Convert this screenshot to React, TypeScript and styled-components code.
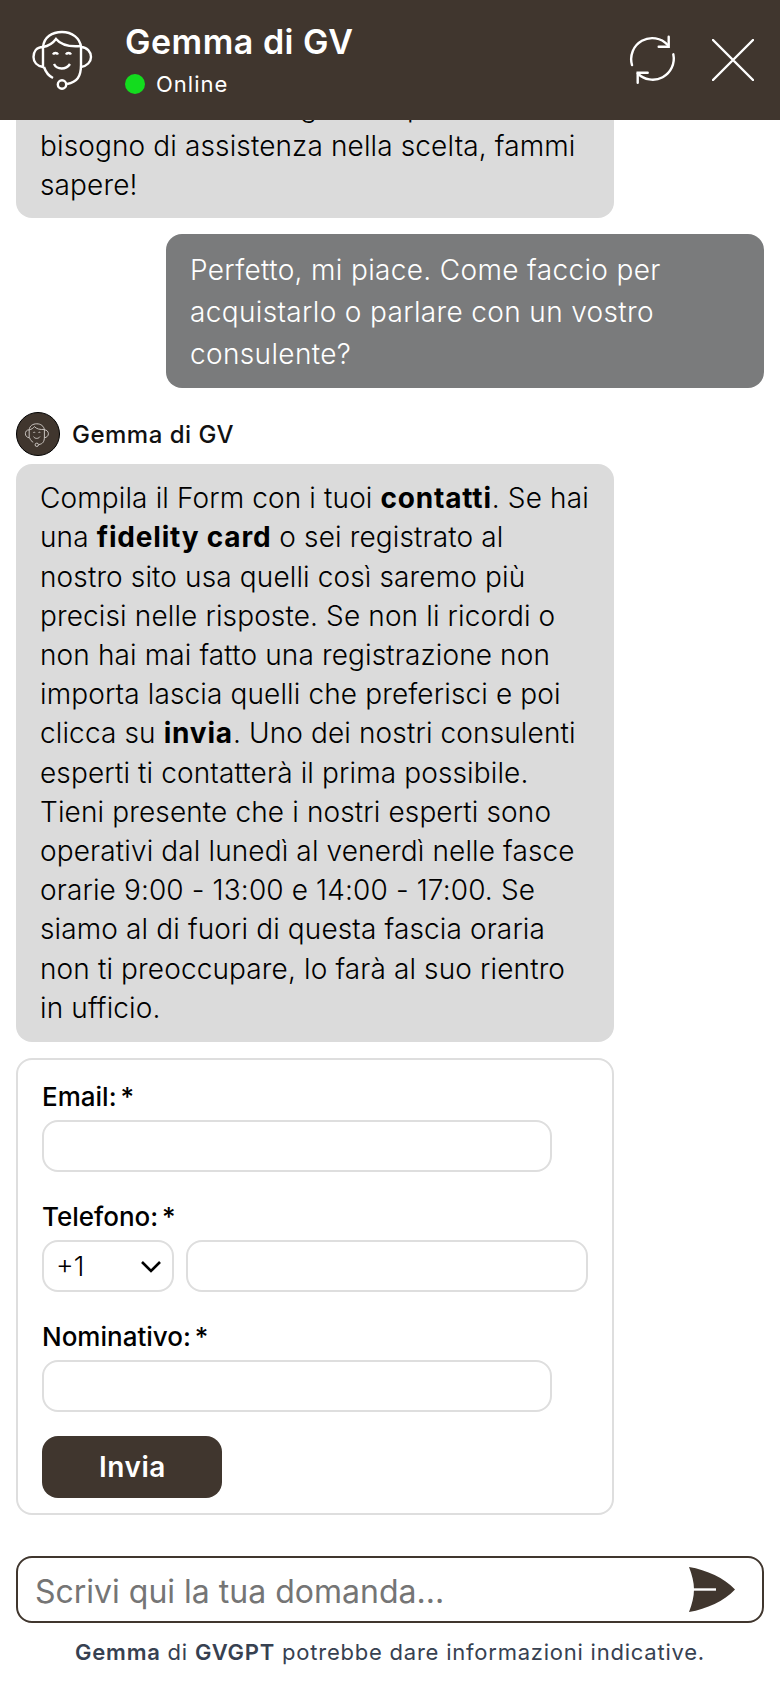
import React from "react";
import styled, { createGlobalStyle } from "styled-components";

const brown = "#40362e";

const Global = createGlobalStyle`
  html, body { margin: 0; padding: 0; background: #fff; }
  * { box-sizing: border-box; }
  body { font-family: Inter, "Liberation Sans", sans-serif; }
`;

const Page = styled.div`
  width: 780px;
  height: 1688px;
  display: flex;
  flex-direction: column;
  background: #fff;
  overflow: hidden;
`;

const Header = styled.header`
  flex: none;
  height: 120px;
  background: ${brown};
  color: #fff;
  display: flex;
  align-items: center;
  padding: 0 26px 0 20px;
  position: relative;
  z-index: 1;
`;

const HeaderIcon = styled.svg`
  width: 90px;
  height: 85px;
  flex: none;
  margin-top: -5px;
`;

const HeaderText = styled.div`
  margin-left: 15px;
  flex: 1;
  display: flex;
  flex-direction: column;
  gap: 9px;
  margin-top: -1px;
`;

const Title = styled.div`
  font-size: 34px;
  font-weight: 600;
  line-height: 40px;
  letter-spacing: 0.5px;
`;

const Status = styled.div`
  display: flex;
  align-items: center;
  gap: 11px;
  font-size: 22px;
  line-height: 26px;
  letter-spacing: 1px;
`;

const Dot = styled.span`
  width: 20px;
  height: 20px;
  border-radius: 50%;
  background: #13dc1e;
`;

const RefreshIcon = styled.svg`
  width: 50px;
  height: 50px;
  margin-right: 33px;
`;

const CloseIcon = styled.svg`
  width: 42px;
  height: 42px;
`;

const Messages = styled.main`
  flex: 1;
  min-height: 0;
  overflow: hidden;
  display: flex;
  flex-direction: column;
  justify-content: flex-end;
  padding: 0 16px 41px;
`;

const Bubble = styled.div<{ $user?: boolean; $tall?: boolean; $long?: boolean }>`
  flex: none;
  width: 598px;
  align-self: ${(p) => (p.$user ? "flex-end" : "flex-start")};
  background: ${(p) => (p.$user ? "#7a7b7c" : "#dbdbdb")};
  color: ${(p) => (p.$user ? "#fff" : "#000")};
  border-radius: 16px;
  padding: 15px 24px ${(p) => (p.$long ? "14px" : "13px")};
  font-size: 28px;
  letter-spacing: ${(p) => (p.$user ? "0.35px" : "0.13px")};
  line-height: ${(p) => (p.$tall ? "42px" : "39.2px")};
  font-weight: 360;
  margin-bottom: 16px;
  white-space: nowrap;
  b { font-weight: 700; letter-spacing: 0.8px; }
`;

const Sender = styled.div`
  flex: none;
  display: flex;
  align-items: center;
  gap: 12px;
  margin: 8px 0 8px;
  font-size: 24px;
  font-weight: 500;
  letter-spacing: 0.5px;
  color: #111;
`;

const Avatar = styled.div`
  width: 44px;
  height: 44px;
  border-radius: 50%;
  background: ${brown};
  border: 1px solid #000;
  display: flex;
  align-items: center;
  justify-content: center;
`;

const AvatarIcon = styled.svg`
  width: 36px;
  height: 34px;
`;

const FormCard = styled.form`
  flex: none;
  width: 598px;
  height: 457px;
  border: 2px solid #dedede;
  border-radius: 16px;
  padding: 21px 24px 0;
  display: flex;
  flex-direction: column;
  align-items: flex-start;
`;

const Label = styled.label`
  font-size: 26px;
  font-weight: 500;
  line-height: 32px;
  word-spacing: -3px;
  color: #000;
  margin-bottom: 7px;
`;

const Field = styled.input<{ $wide?: boolean; $gap?: number }>`
  display: block;
  width: ${(p) => (p.$wide ? "402px" : "510px")};
  height: 52px;
  border: 2px solid #dedede;
  border-radius: 16px;
  background: #fff;
  outline: none;
  margin-bottom: ${(p) => p.$gap ?? 29}px;
`;

const PhoneRow = styled.div`
  display: flex;
  gap: 12px;
`;

const SelectWrap = styled.div`
  position: relative;
  width: 132px;
  height: 52px;
`;

const CodeSelect = styled.select`
  appearance: none;
  display: block;
  width: 100%;
  height: 100%;
  border: 2px solid #dedede;
  border-radius: 16px;
  background: #fff;
  padding: 0 12px;
  font-family: inherit;
  font-size: 27px;
  font-weight: 300;
  color: #000;
`;

const Chevron = styled.svg`
  position: absolute;
  right: 12px;
  top: 20px;
  width: 22px;
  height: 14px;
  pointer-events: none;
`;

const SubmitButton = styled.button`
  width: 180px;
  height: 62px;
  border: 0;
  border-radius: 16px;
  background: ${brown};
  color: #fff;
  font-family: inherit;
  font-size: 28px;
  font-weight: 600;
  letter-spacing: 0.5px;
  padding: 0 0 0 1px;
`;

const Composer = styled.div`
  flex: none;
  height: 67px;
  margin: 0 16px;
  border: 2px solid ${brown};
  border-radius: 16px;
  display: flex;
  align-items: center;
  padding: 0 27px 0 17px;
`;

const ComposerInput = styled.input`
  flex: 1;
  min-width: 0;
  height: 100%;
  border: 0;
  outline: none;
  background: transparent;
  font-family: inherit;
  font-size: 32px;
  padding: 3px 0 0;
`;

const SendIcon = styled.svg`
  width: 46px;
  height: 46px;
  flex: none;
`;

const Footer = styled.footer`
  flex: none;
  height: 65px;
  padding-top: 15px;
  text-align: center;
  font-size: 22px;
  line-height: 28px;
  letter-spacing: 0.77px;
  color: #374151;
  b { font-weight: 600; }
`;

const Headset = () => (
  <>
    <path d="M23 32C24 22 32 17 42 17C52 17 60 23 61 32" />
    <path d="M23 32C29 31 33 28 36 24C41 30 50 32 61 31" />
    <path d="M23 32C16 32 13.5 37 13.5 42C13.5 47 17 51 23 52L23 32Z" />
    <path d="M61 32C67 32 71 37 71 42C71 47 67 51 61 52" />
    <path d="M61 31V50C61 62 57 67 47 69" />
    <path d="M24 52C26 58 29 61 33 63" />
    <circle cx="42" cy="69.5" r="4.2" />
    <path d="M33 39.5C34 37.5 37 37.5 38 39.5M46 39.5C47 37.5 50 37.5 51 39.5" />
    <path d="M34 49C37 55 46 55 50 49" />
  </>
);

export default function App() {
  return (
    <Page>
      <Global />
      <Header>
        <HeaderIcon viewBox="0 0 90 85" fill="none" stroke="#fff" strokeWidth="2.4">
          <Headset />
        </HeaderIcon>
        <HeaderText>
          <Title>Gemma di GV</Title>
          <Status>
            <Dot />
            Online
          </Status>
        </HeaderText>
        <RefreshIcon viewBox="0 0 50 50" fill="none" stroke="#fff" strokeWidth="2.4" strokeLinecap="round">
          <path d="M3 30A21 21 0 0 1 38.7 10" />
          <path d="M39.7 1.7V11.7H29.7" />
          <path d="M44.3 19.3A21 21 0 0 1 8.7 38.3" />
          <path d="M8.7 47.7V37.7H18.7" />
        </RefreshIcon>
        <CloseIcon viewBox="0 0 42 42" fill="none" stroke="#fff" strokeWidth="2.4" strokeLinecap="round">
          <path d="M1 1L41 41M41 1L1 41" />
        </CloseIcon>
      </Header>
      <Messages>
        <Bubble>
          Ecco tutte le nostre gemme pure. Se hai
          <br />
          bisogno di assistenza nella scelta, fammi
          <br />
          sapere!
        </Bubble>
        <Bubble $user $tall>
          Perfetto, mi piace. Come faccio per
          <br />
          acquistarlo o parlare con un vostro
          <br />
          consulente?
        </Bubble>
        <Sender>
          <Avatar>
            <AvatarIcon viewBox="0 0 90 85" fill="none" stroke="#cfcac5" strokeWidth="2.4">
              <Headset />
            </AvatarIcon>
          </Avatar>
          Gemma di GV
        </Sender>
        <Bubble $long>
          Compila il Form con i tuoi <b>contatti</b>. Se hai
          <br />
          una <b>fidelity card</b> o sei registrato al
          <br />
          nostro sito usa quelli così saremo più
          <br />
          precisi nelle risposte. Se non li ricordi o
          <br />
          non hai mai fatto una registrazione non
          <br />
          importa lascia quelli che preferisci e poi
          <br />
          clicca su <b>invia</b>. Uno dei nostri consulenti
          <br />
          esperti ti contatterà il prima possibile.
          <br />
          Tieni presente che i nostri esperti sono
          <br />
          operativi dal lunedì al venerdì nelle fasce
          <br />
          orarie 9:00 - 13:00 e 14:00 - 17:00. Se
          <br />
          siamo al di fuori di questa fascia oraria
          <br />
          non ti preoccupare, lo farà al suo rientro
          <br />
          in ufficio.
        </Bubble>
        <FormCard onSubmit={(e) => e.preventDefault()}>
          <Label htmlFor="email">Email: *</Label>
          <Field id="email" />
          <Label htmlFor="phone">Telefono: *</Label>
          <PhoneRow>
            <SelectWrap>
              <CodeSelect defaultValue="+1">
                <option>+1</option>
                <option>+39</option>
              </CodeSelect>
              <Chevron viewBox="0 0 22 14" fill="none" stroke="#000" strokeWidth="2.6">
                <path d="M2 2L11 11L20 2" />
              </Chevron>
            </SelectWrap>
            <Field id="phone" $wide />
          </PhoneRow>
          <Label htmlFor="name">Nominativo: *</Label>
          <Field id="name" $gap={24} />
          <SubmitButton type="submit">Invia</SubmitButton>
        </FormCard>
      </Messages>
      <Composer>
        <ComposerInput placeholder="Scrivi qui la tua domanda..." />
        <SendIcon viewBox="0 0 46 46">
          <path d="M0 0C18 3 35 11 46 22.5C35 34 18 42 0 45C3 37 5 30 5 22.5C5 15 3 8 0 0Z" fill={brown} />
          <path d="M4 22.5H27" stroke="#fff" strokeWidth="2.4" />
        </SendIcon>
      </Composer>
      <Footer>
        <b>Gemma</b> di <b>GVGPT</b> potrebbe dare informazioni indicative.
      </Footer>
    </Page>
  );
}
